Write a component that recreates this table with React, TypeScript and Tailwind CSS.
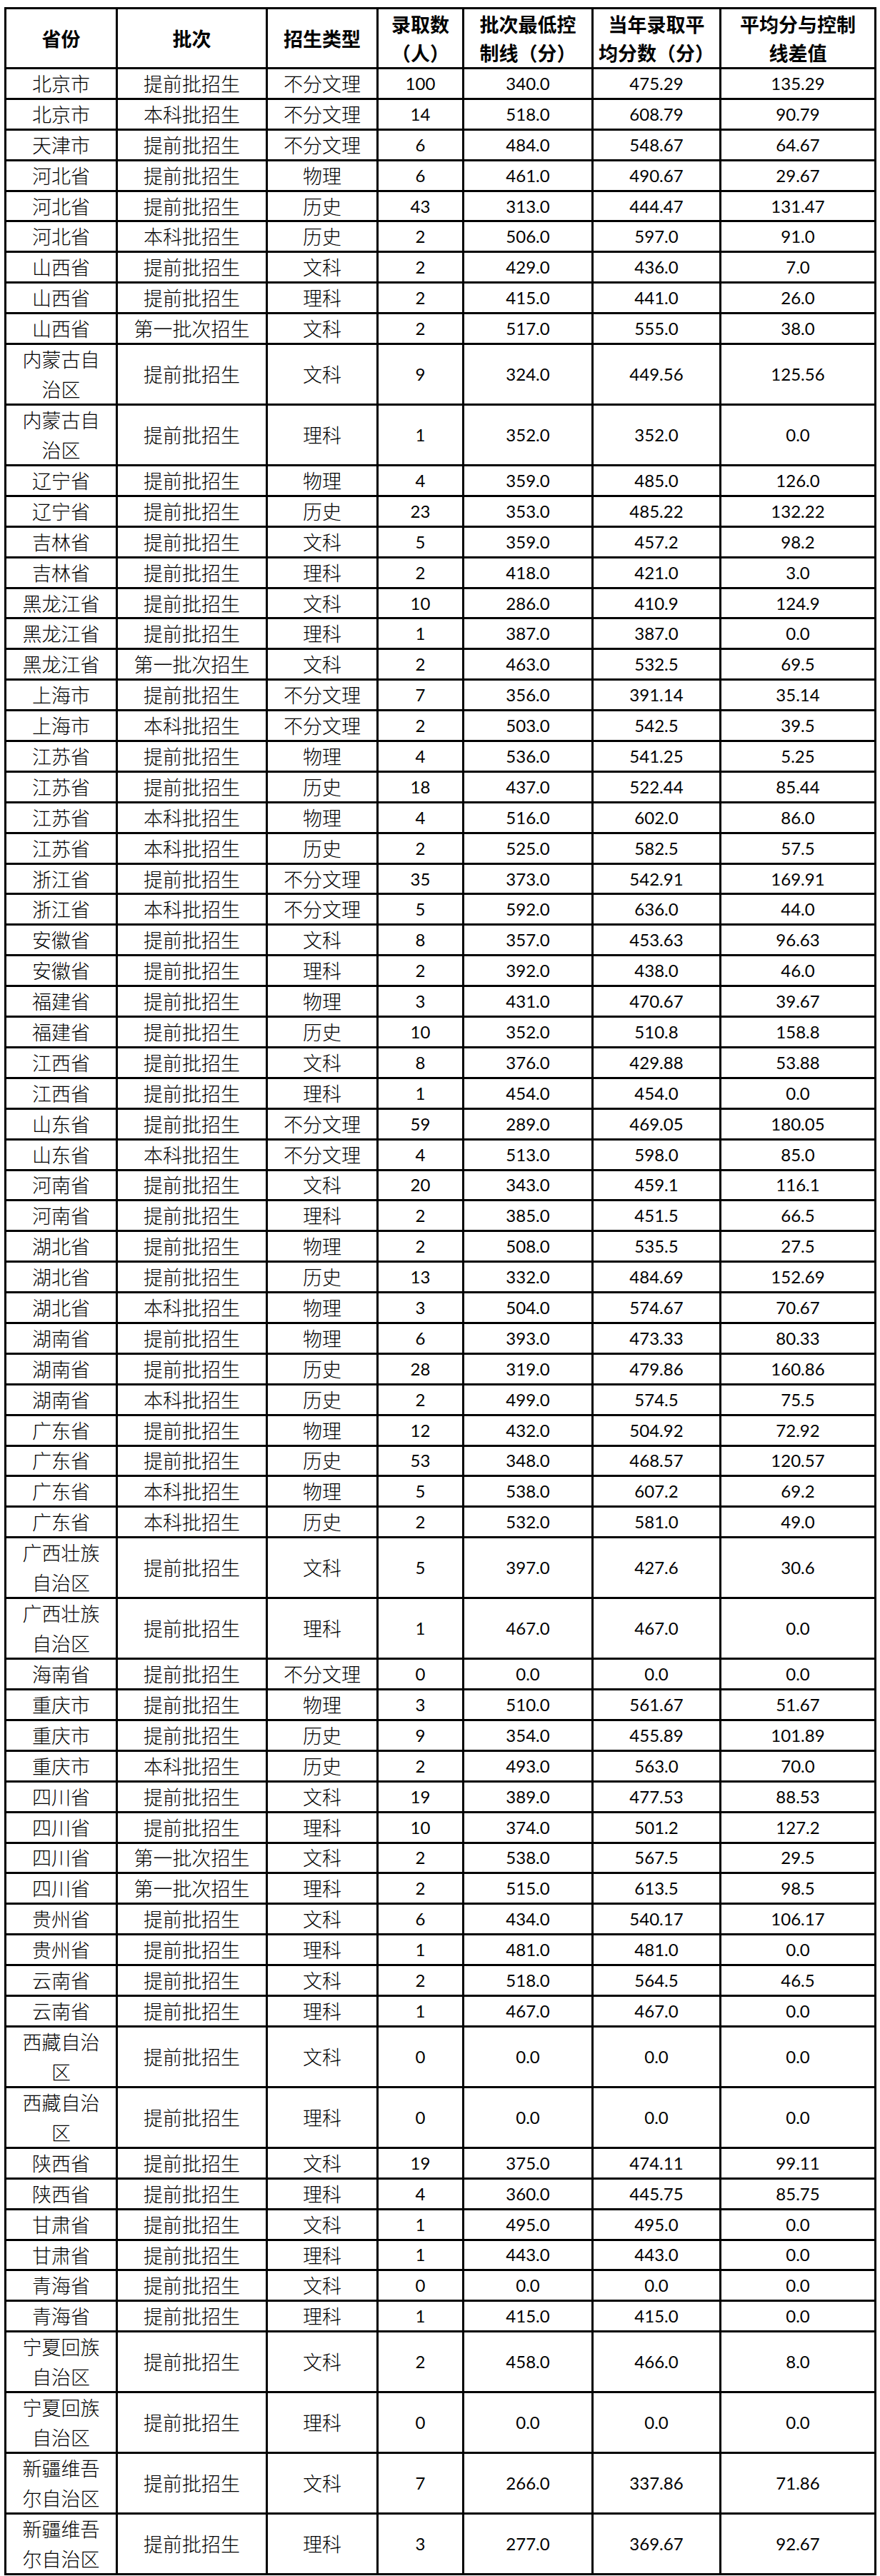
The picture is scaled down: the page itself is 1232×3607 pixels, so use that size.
const header = ['省份', '批次', '招生类型', '录取数|（人）', '批次最低控|制线（分）', '当年录取平|均分数（分）', '平均分与控制|线差值']

const rows = [
  '北京市,提前批招生,不分文理,100,340.0,475.29,135.29',
  '北京市,本科批招生,不分文理,14,518.0,608.79,90.79',
  '天津市,提前批招生,不分文理,6,484.0,548.67,64.67',
  '河北省,提前批招生,物理,6,461.0,490.67,29.67',
  '河北省,提前批招生,历史,43,313.0,444.47,131.47',
  '河北省,本科批招生,历史,2,506.0,597.0,91.0',
  '山西省,提前批招生,文科,2,429.0,436.0,7.0',
  '山西省,提前批招生,理科,2,415.0,441.0,26.0',
  '山西省,第一批次招生,文科,2,517.0,555.0,38.0',
  '内蒙古自|治区,提前批招生,文科,9,324.0,449.56,125.56',
  '内蒙古自|治区,提前批招生,理科,1,352.0,352.0,0.0',
  '辽宁省,提前批招生,物理,4,359.0,485.0,126.0',
  '辽宁省,提前批招生,历史,23,353.0,485.22,132.22',
  '吉林省,提前批招生,文科,5,359.0,457.2,98.2',
  '吉林省,提前批招生,理科,2,418.0,421.0,3.0',
  '黑龙江省,提前批招生,文科,10,286.0,410.9,124.9',
  '黑龙江省,提前批招生,理科,1,387.0,387.0,0.0',
  '黑龙江省,第一批次招生,文科,2,463.0,532.5,69.5',
  '上海市,提前批招生,不分文理,7,356.0,391.14,35.14',
  '上海市,本科批招生,不分文理,2,503.0,542.5,39.5',
  '江苏省,提前批招生,物理,4,536.0,541.25,5.25',
  '江苏省,提前批招生,历史,18,437.0,522.44,85.44',
  '江苏省,本科批招生,物理,4,516.0,602.0,86.0',
  '江苏省,本科批招生,历史,2,525.0,582.5,57.5',
  '浙江省,提前批招生,不分文理,35,373.0,542.91,169.91',
  '浙江省,本科批招生,不分文理,5,592.0,636.0,44.0',
  '安徽省,提前批招生,文科,8,357.0,453.63,96.63',
  '安徽省,提前批招生,理科,2,392.0,438.0,46.0',
  '福建省,提前批招生,物理,3,431.0,470.67,39.67',
  '福建省,提前批招生,历史,10,352.0,510.8,158.8',
  '江西省,提前批招生,文科,8,376.0,429.88,53.88',
  '江西省,提前批招生,理科,1,454.0,454.0,0.0',
  '山东省,提前批招生,不分文理,59,289.0,469.05,180.05',
  '山东省,本科批招生,不分文理,4,513.0,598.0,85.0',
  '河南省,提前批招生,文科,20,343.0,459.1,116.1',
  '河南省,提前批招生,理科,2,385.0,451.5,66.5',
  '湖北省,提前批招生,物理,2,508.0,535.5,27.5',
  '湖北省,提前批招生,历史,13,332.0,484.69,152.69',
  '湖北省,本科批招生,物理,3,504.0,574.67,70.67',
  '湖南省,提前批招生,物理,6,393.0,473.33,80.33',
  '湖南省,提前批招生,历史,28,319.0,479.86,160.86',
  '湖南省,本科批招生,历史,2,499.0,574.5,75.5',
  '广东省,提前批招生,物理,12,432.0,504.92,72.92',
  '广东省,提前批招生,历史,53,348.0,468.57,120.57',
  '广东省,本科批招生,物理,5,538.0,607.2,69.2',
  '广东省,本科批招生,历史,2,532.0,581.0,49.0',
  '广西壮族|自治区,提前批招生,文科,5,397.0,427.6,30.6',
  '广西壮族|自治区,提前批招生,理科,1,467.0,467.0,0.0',
  '海南省,提前批招生,不分文理,0,0.0,0.0,0.0',
  '重庆市,提前批招生,物理,3,510.0,561.67,51.67',
  '重庆市,提前批招生,历史,9,354.0,455.89,101.89',
  '重庆市,本科批招生,历史,2,493.0,563.0,70.0',
  '四川省,提前批招生,文科,19,389.0,477.53,88.53',
  '四川省,提前批招生,理科,10,374.0,501.2,127.2',
  '四川省,第一批次招生,文科,2,538.0,567.5,29.5',
  '四川省,第一批次招生,理科,2,515.0,613.5,98.5',
  '贵州省,提前批招生,文科,6,434.0,540.17,106.17',
  '贵州省,提前批招生,理科,1,481.0,481.0,0.0',
  '云南省,提前批招生,文科,2,518.0,564.5,46.5',
  '云南省,提前批招生,理科,1,467.0,467.0,0.0',
  '西藏自治|区,提前批招生,文科,0,0.0,0.0,0.0',
  '西藏自治|区,提前批招生,理科,0,0.0,0.0,0.0',
  '陕西省,提前批招生,文科,19,375.0,474.11,99.11',
  '陕西省,提前批招生,理科,4,360.0,445.75,85.75',
  '甘肃省,提前批招生,文科,1,495.0,495.0,0.0',
  '甘肃省,提前批招生,理科,1,443.0,443.0,0.0',
  '青海省,提前批招生,文科,0,0.0,0.0,0.0',
  '青海省,提前批招生,理科,1,415.0,415.0,0.0',
  '宁夏回族|自治区,提前批招生,文科,2,458.0,466.0,8.0',
  '宁夏回族|自治区,提前批招生,理科,0,0.0,0.0,0.0',
  '新疆维吾|尔自治区,提前批招生,文科,7,266.0,337.86,71.86',
  '新疆维吾|尔自治区,提前批招生,理科,3,277.0,369.67,92.67',
].map((r) => r.split(','))

function Lines({ text }: { text: string }) {
  return (
    <>
      {text.split('|').map((line, i) => (
        <span key={i} className="block">
          {line}
        </span>
      ))}
    </>
  )
}

export default function App() {
  return (
    <div className="min-h-screen bg-white pt-[10px] pl-[6px]">
      <div className="grid w-fit grid-cols-[156px_210px_155px_120px_181px_179px_217px] border-l-[3px] border-t-[3px] border-black text-black">
        {header.map((h) => (
          <div
            key={h}
            className="flex h-[84px] flex-col items-center justify-center border-r-[3px] border-b-[3px] border-black text-center font-['Noto_Sans_CJK_SC',sans-serif] text-[27px] font-bold leading-[40px]"
          >
            <Lines text={h} />
          </div>
        ))}
        {rows.map((r, ri) => {
          const tall = r[0].includes('|')
          return r.map((cell, ci) => (
            <div
              key={`${ri}-${ci}`}
              className={`flex flex-col items-center justify-center border-r-[3px] border-b-[3px] border-black text-center ${
                tall ? 'h-[85px]' : 'h-[42.9px]'
              } ${
                ci < 3
                  ? "font-['Noto_Sans_CJK_SC',sans-serif] text-[27px] font-light leading-[42px]"
                  : "font-['Lato','Noto_Sans_CJK_SC',sans-serif] text-[24px] leading-[30px]"
              }`}
            >
              <Lines text={cell} />
            </div>
          ))
        })}
      </div>
    </div>
  )
}
